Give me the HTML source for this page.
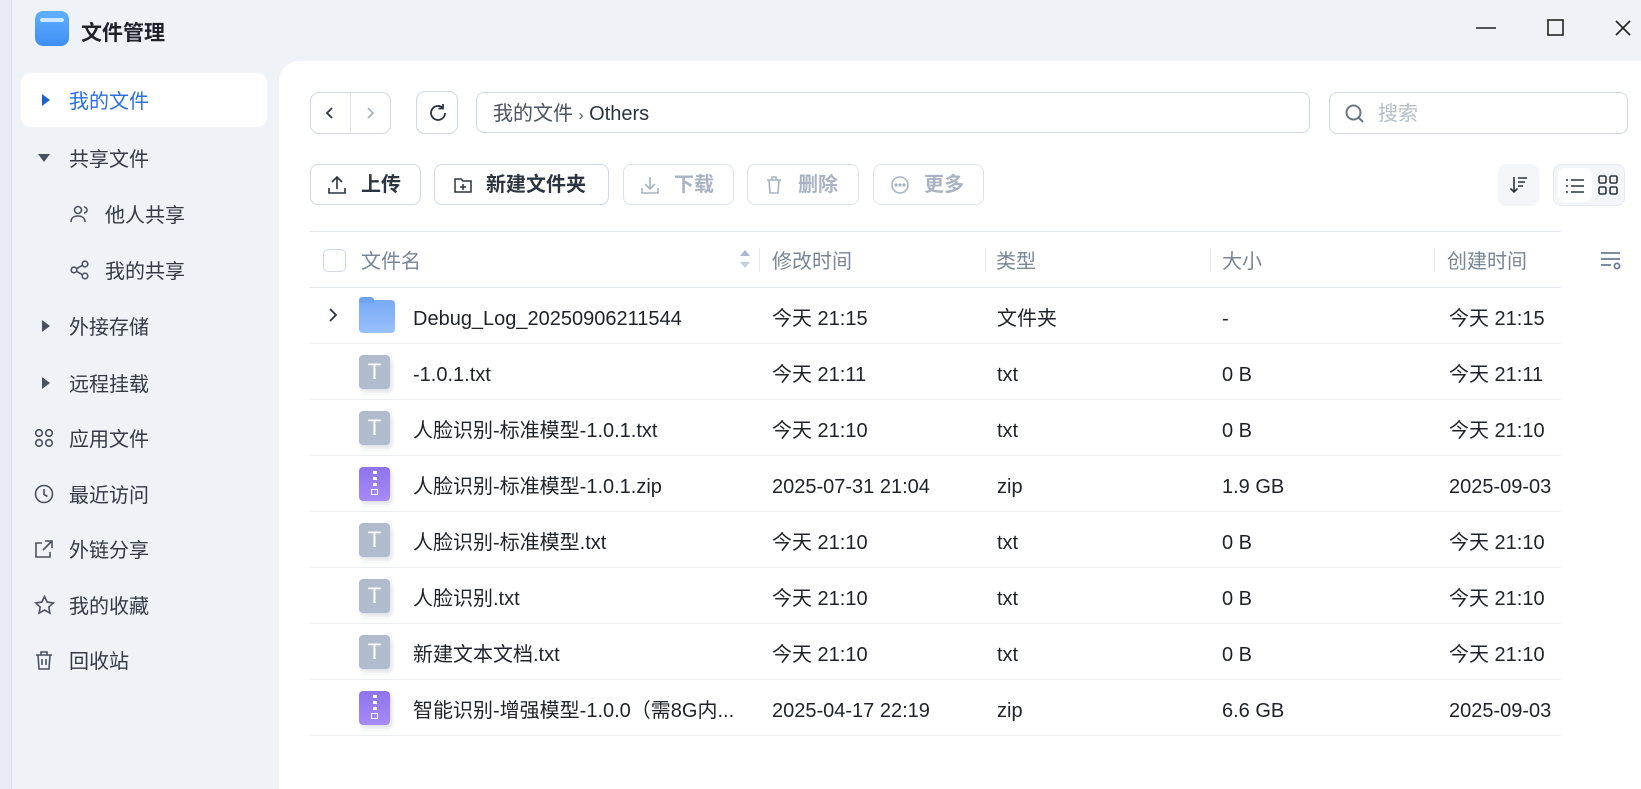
<!DOCTYPE html>
<html><head><meta charset="utf-8"><style>
*{box-sizing:border-box;margin:0;padding:0}
body{width:1641px;height:789px;overflow:hidden;background:#eff3f8;font-family:"Liberation Sans","Noto Sans CJK SC",sans-serif;color:#1f2329;position:relative}
.abs{position:absolute}
.strip{left:0;top:0;width:12px;height:789px;background:#e8ecf2;border-right:1px solid #d8dde5}
.side{font-size:20px;color:#333a45}
.side .it{position:absolute;left:21px;width:246px;height:54px;line-height:54px}
.side .it span.t{position:absolute;left:48px;top:2px;line-height:54px}
.panel{left:279px;top:61px;width:1362px;height:728px;background:#fff;border-top-left-radius:20px}
.btn{position:absolute;border:1px solid #cfd7e3;border-radius:8px;background:#fff;height:41px;top:164px;font-size:20px;font-weight:bold;color:#2c3440;line-height:39px}
.btn.dis{color:#a9b3c2;border-color:#dde3ec}
.btn svg{position:absolute;top:10px}
.btn span{position:absolute;top:1px;line-height:39px}
.row{position:absolute;left:310px;width:1251px;height:56px;border-bottom:1px solid #edf0f4;font-size:20px;color:#1f2329}
.row>span{position:absolute;top:3px;line-height:56px;white-space:nowrap}
.hdr{position:absolute;top:234px;height:56px;line-height:56px;font-size:20px;color:#7a8597}
.sep{position:absolute;top:248px;width:1px;height:24px;background:#e3e7ee}
.ficon{position:absolute;left:49px;top:11px;width:31px;height:34px;border-radius:4px;box-shadow:2px 3px 4px rgba(120,130,150,.25)}
.ficon b{position:absolute;left:0;top:0;width:31px;line-height:34px;text-align:center;color:#fff;font-size:22px;font-weight:normal}
</style></head><body>
<div class="abs strip"></div>
<div class="abs" style="left:35px;top:11px;width:34px;height:35px;border-radius:8px;background:linear-gradient(#5fb0ff,#3f8ff5)"><div style="position:absolute;left:5px;top:7px;width:24px;height:4px;background:#cfe6ff;border-radius:2px"></div></div>
<div class="abs" style="left:81px;top:17px;font-size:21px;font-weight:bold;color:#1f2329">文件管理</div>
<svg class="abs" style="left:1474px;top:18px" width="24" height="20"><line x1="2" y1="10" x2="22" y2="10" stroke="#222" stroke-width="1.6"/></svg>
<svg class="abs" style="left:1546px;top:18px" width="20" height="20"><rect x="2" y="2" width="15" height="15" fill="none" stroke="#222" stroke-width="1.6"/></svg>
<svg class="abs" style="left:1613px;top:18px" width="20" height="20"><path d="M3 3L17 17M17 3L3 17" stroke="#222" stroke-width="1.6"/></svg>
<div class="side">
<div class="it" style="top:73px;background:#fff;border-radius:10px;color:#2b6fe0"><svg style="position:absolute;left:20px;top:20px" width="10" height="14"><path d="M1 1L9 7L1 13Z" fill="#1f5fd0"/></svg><span class="t">我的文件</span></div>
<div class="it" style="top:131px"><svg style="position:absolute;left:16px;top:22px" width="14" height="10"><path d="M1 1L13 1L7 9Z" fill="#4a5260"/></svg><span class="t">共享文件</span></div>
<div class="it" style="top:187px"><svg style="position:absolute;left:49px;top:17px" width="20" height="20" fill="none" stroke="#4a5260" stroke-width="1.6"><circle cx="8" cy="6" r="3.5"/><path d="M1 18c0-4 3-6 7-6s7 2 7 6M14 3a3 3 0 010 6"/></svg><span class="t" style="left:84px">他人共享</span></div>
<div class="it" style="top:243px"><svg style="position:absolute;left:49px;top:17px" width="20" height="20" fill="none" stroke="#4a5260" stroke-width="1.6"><circle cx="15" cy="4" r="2.8"/><circle cx="4" cy="10" r="2.8"/><circle cx="15" cy="16" r="2.8"/><path d="M6.5 8.7L12.5 5.3M6.5 11.3L12.5 14.7"/></svg><span class="t" style="left:84px">我的共享</span></div>
<div class="it" style="top:299px"><svg style="position:absolute;left:20px;top:20px" width="10" height="14"><path d="M1 1L9 7L1 13Z" fill="#4a5260"/></svg><span class="t">外接存储</span></div>
<div class="it" style="top:356px"><svg style="position:absolute;left:20px;top:20px" width="10" height="14"><path d="M1 1L9 7L1 13Z" fill="#4a5260"/></svg><span class="t">远程挂载</span></div>
<div class="it" style="top:411px"><svg style="position:absolute;left:13px;top:17px" width="20" height="20" fill="none" stroke="#4a5260" stroke-width="1.6"><circle cx="5" cy="5" r="3.3"/><circle cx="15" cy="5" r="3.3"/><circle cx="5" cy="15" r="3.3"/><circle cx="15" cy="15" r="3.3"/></svg><span class="t">应用文件</span></div>
<div class="it" style="top:467px"><svg style="position:absolute;left:13px;top:17px" width="20" height="20" fill="none" stroke="#4a5260" stroke-width="1.6"><circle cx="10" cy="10" r="8.5"/><path d="M10 5v5.5l3.5 2"/></svg><span class="t">最近访问</span></div>
<div class="it" style="top:522px"><svg style="position:absolute;left:13px;top:17px" width="20" height="20" fill="none" stroke="#4a5260" stroke-width="1.6"><path d="M8 4H2v14h14v-5M11 2h7v7M18 2L9 11"/></svg><span class="t">外链分享</span></div>
<div class="it" style="top:578px"><svg style="position:absolute;left:13px;top:17px" width="21" height="20" fill="none" stroke="#4a5260" stroke-width="1.6"><path d="M10.5 1.5l2.7 5.6 6.1.8-4.5 4.2 1.1 6-5.4-3-5.4 3 1.1-6L1.7 7.9l6.1-.8z"/></svg><span class="t">我的收藏</span></div>
<div class="it" style="top:633px"><svg style="position:absolute;left:13px;top:17px" width="20" height="21" fill="none" stroke="#4a5260" stroke-width="1.6"><path d="M2 5h16M7 5V2h6v3M4 5l1 14h10l1-14M8 9v6M12 9v6"/></svg><span class="t">回收站</span></div>
</div>
<div class="abs panel"></div>
<div class="abs" style="left:310px;top:92px;width:81px;height:42px;border:1px solid #cfd7e3;border-radius:9px;background:#fff"><div style="position:absolute;left:39px;top:0;width:1px;height:40px;background:#dde3ec"></div>
<svg style="position:absolute;left:13px;top:13px" width="12" height="14"><path d="M8 2L3 7l5 5" fill="none" stroke="#2c3440" stroke-width="1.8"/></svg>
<svg style="position:absolute;left:53px;top:13px" width="12" height="14"><path d="M4 2l5 5-5 5" fill="none" stroke="#a9b3c2" stroke-width="1.8"/></svg></div>
<div class="abs" style="left:416px;top:91px;width:42px;height:43px;border:1px solid #cfd7e3;border-radius:9px;background:#fff"><svg style="position:absolute;left:10px;top:10px" width="22" height="22" fill="none" stroke="#2c3440" stroke-width="1.8"><path d="M18 11a7 7 0 11-2.5-5.4"/><path d="M16 2v4.5h-4.5"/></svg></div>
<div class="abs" style="left:476px;top:92px;width:834px;height:41px;border:1px solid #cfd7e3;border-radius:8px;background:#fff;font-size:20px;line-height:43px;color:#4a5260;padding-left:16px">我的文件 <span style="font-size:15px">›</span> <span style="color:#2c3440">Others</span></div>
<div class="abs" style="left:1329px;top:92px;width:299px;height:42px;border:1px solid #cfd7e3;border-radius:8px;background:#fff;font-size:20px;line-height:43px;color:#b5bdc9;padding-left:48px">搜索<svg style="position:absolute;left:14px;top:10px" width="22" height="22" fill="none" stroke="#6a7587" stroke-width="2"><circle cx="9.5" cy="9.5" r="7"/><path d="M15 15l4 4"/></svg></div>
<div class="btn" style="left:310px;width:111px"><svg style="left:16px" width="20" height="20" fill="none" stroke="#2c3440" stroke-width="1.6"><path d="M10 14V2M5 7l5-5 5 5M2 13v5h16v-5"/></svg><span style="left:50px">上传</span></div>
<div class="btn" style="left:434px;width:175px"><svg style="left:18px" width="20" height="20" fill="none" stroke="#2c3440" stroke-width="1.5"><path d="M2 4h6l2 2h8v11H2z M10 9v6M7 12h6"/></svg><span style="left:51px">新建文件夹</span></div>
<div class="btn dis" style="left:623px;width:111px"><svg style="left:16px" width="20" height="20" fill="none" stroke="#a9b3c2" stroke-width="1.6"><path d="M10 2v12M5 9l5 5 5-5M2 13v5h16v-5"/></svg><span style="left:50px">下载</span></div>
<div class="btn dis" style="left:747px;width:112px"><svg style="left:16px" width="20" height="20" fill="none" stroke="#a9b3c2" stroke-width="1.6"><path d="M3 5h14M8 5V2h4v3M5 5l1 13h8l1-13"/></svg><span style="left:50px">删除</span></div>
<div class="btn dis" style="left:873px;width:111px"><svg style="left:16px" width="20" height="20" fill="none" stroke="#a9b3c2" stroke-width="1.6"><circle cx="10" cy="10" r="8"/><circle cx="6" cy="10" r=".8"/><circle cx="10" cy="10" r=".8"/><circle cx="14" cy="10" r=".8"/></svg><span style="left:50px">更多</span></div>
<div class="abs" style="left:1498px;top:164px;width:41px;height:42px;background:#f3f5f8;border-radius:8px"><svg style="position:absolute;left:11px;top:11px" width="20" height="20" fill="none" stroke="#2c3440" stroke-width="1.6"><path d="M5 2v15M1.5 13.5L5 17l3.5-3.5M9 3h9M9 7h7M9 11h5"/></svg></div>
<div class="abs" style="left:1553px;top:164px;width:72px;height:42px;background:#f3f5f8;border-radius:8px;border:1px solid #e6eaf0"><div style="position:absolute;left:4px;top:3px;width:34px;height:34px;background:#fff;border-radius:7px"></div>
<svg style="position:absolute;left:11px;top:11px" width="20" height="20" fill="none" stroke="#2c3440" stroke-width="1.6"><path d="M6 4h13M6 10h13M6 16h13M1 4h2M1 10h2M1 16h2"/></svg>
<svg style="position:absolute;left:44px;top:10px" width="21" height="21" fill="none" stroke="#2c3440" stroke-width="1.6"><rect x="1" y="1" width="7" height="7" rx="1.5"/><rect x="12" y="1" width="7" height="7" rx="1.5"/><rect x="1" y="12" width="7" height="7" rx="1.5"/><rect x="12" y="12" width="7" height="7" rx="1.5"/></svg></div>
<div class="abs" style="left:310px;top:231px;width:1251px;height:1px;background:#e3e7ee"></div>
<div class="abs" style="left:310px;top:287px;width:1251px;height:1px;background:#e3e7ee"></div>
<div class="abs" style="left:323px;top:249px;width:23px;height:23px;border:1.5px solid #cfd7e3;border-radius:5px;background:#fff"></div>
<div class="hdr" style="left:361px">文件名</div>
<svg class="abs" style="left:739px;top:247px" width="12" height="24"><path d="M1 9l5-6 5 6z" fill="#a9b6d0"/><path d="M1 15l5 6 5-6z" fill="#c5cee0"/></svg>
<div class="sep" style="left:759px"></div><div class="hdr" style="left:772px">修改时间</div>
<div class="sep" style="left:985px"></div><div class="hdr" style="left:996px">类型</div>
<div class="sep" style="left:1210px"></div><div class="hdr" style="left:1222px">大小</div>
<div class="sep" style="left:1434px"></div><div class="hdr" style="left:1447px">创建时间</div>
<svg class="abs" style="left:1600px;top:250px" width="22" height="22" fill="none" stroke="#6a7a9a" stroke-width="1.8"><path d="M1 3h19M1 9h19M1 15h10"/><circle cx="17" cy="16" r="2.6"/></svg>
<div class="row" style="top:288px"><svg style="position:absolute;left:18px;top:20px" width="10" height="14"><path d="M2 1l6 6-6 6" fill="none" stroke="#2c3440" stroke-width="1.8"/></svg><div class="ficon" style="top:12px;height:33px;width:36px;background:linear-gradient(#78aaf5,#98c0fb);box-shadow:none"><div style="position:absolute;left:0;top:-3px;width:15px;height:6px;background:#6fa3f3;border-radius:3px 3px 0 0"></div></div><span style="left:103px">Debug_Log_20250906211544</span><span style="left:462px">今天 21:15</span><span style="left:687px">文件夹</span><span style="left:912px">-</span><span style="left:1139px">今天 21:15</span></div>
<div class="row" style="top:344px"><div class="ficon" style="background:#b0bccd"><b>T</b></div><span style="left:103px">-1.0.1.txt</span><span style="left:462px">今天 21:11</span><span style="left:687px">txt</span><span style="left:912px">0 B</span><span style="left:1139px">今天 21:11</span></div>
<div class="row" style="top:400px"><div class="ficon" style="background:#b0bccd"><b>T</b></div><span style="left:103px">人脸识别-标准模型-1.0.1.txt</span><span style="left:462px">今天 21:10</span><span style="left:687px">txt</span><span style="left:912px">0 B</span><span style="left:1139px">今天 21:10</span></div>
<div class="row" style="top:456px"><div class="ficon" style="background:linear-gradient(#8f73ee,#a58bf5)"><div style="position:absolute;left:14px;top:4px;width:4px;height:16px;background:repeating-linear-gradient(#fff 0 3px,transparent 3px 6px)"></div><div style="position:absolute;left:12px;top:22px;width:7px;height:6px;border:1.5px solid #fff"></div></div><span style="left:103px">人脸识别-标准模型-1.0.1.zip</span><span style="left:462px">2025-07-31 21:04</span><span style="left:687px">zip</span><span style="left:912px">1.9 GB</span><span style="left:1139px">2025-09-03</span></div>
<div class="row" style="top:512px"><div class="ficon" style="background:#b0bccd"><b>T</b></div><span style="left:103px">人脸识别-标准模型.txt</span><span style="left:462px">今天 21:10</span><span style="left:687px">txt</span><span style="left:912px">0 B</span><span style="left:1139px">今天 21:10</span></div>
<div class="row" style="top:568px"><div class="ficon" style="background:#b0bccd"><b>T</b></div><span style="left:103px">人脸识别.txt</span><span style="left:462px">今天 21:10</span><span style="left:687px">txt</span><span style="left:912px">0 B</span><span style="left:1139px">今天 21:10</span></div>
<div class="row" style="top:624px"><div class="ficon" style="background:#b0bccd"><b>T</b></div><span style="left:103px">新建文本文档.txt</span><span style="left:462px">今天 21:10</span><span style="left:687px">txt</span><span style="left:912px">0 B</span><span style="left:1139px">今天 21:10</span></div>
<div class="row" style="top:680px"><div class="ficon" style="background:linear-gradient(#8f73ee,#a58bf5)"><div style="position:absolute;left:14px;top:4px;width:4px;height:16px;background:repeating-linear-gradient(#fff 0 3px,transparent 3px 6px)"></div><div style="position:absolute;left:12px;top:22px;width:7px;height:6px;border:1.5px solid #fff"></div></div><span style="left:103px">智能识别-增强模型-1.0.0（需8G内...</span><span style="left:462px">2025-04-17 22:19</span><span style="left:687px">zip</span><span style="left:912px">6.6 GB</span><span style="left:1139px">2025-09-03</span></div>
</body></html>
